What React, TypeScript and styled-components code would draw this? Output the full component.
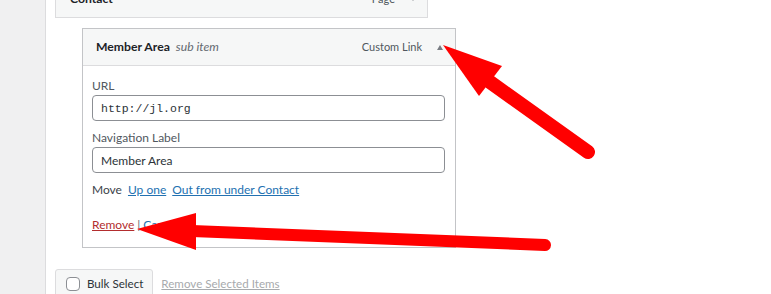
import styled, { createGlobalStyle } from 'styled-components'

const GlobalStyle = createGlobalStyle`
  html, body {
    margin: 0;
    padding: 0;
    background: #fff;
  }
  body {
    font-family: Lato, 'Open Sans', sans-serif;
    font-size: 12px;
    line-height: 16px;
    color: #1d2327;
    overflow: hidden;
  }
`

export default function App() {
  return (
    <>
      <GlobalStyle />
      <Page>
        <Sidebar />
        <Main>
          <ParentItem>
            <ItemTitle>Contact</ItemTitle>
            <ItemControls>
              <ItemType>Page</ItemType>
              <Caret $up={false} />
            </ItemControls>
          </ParentItem>

          <SubItem>
            <SubHeader>
              <ItemTitle>
                Member Area <SubLabel>sub item</SubLabel>
              </ItemTitle>
              <ItemControls>
                <ItemType>Custom Link</ItemType>
                <Caret $up />
              </ItemControls>
            </SubHeader>
            <Settings>
              <Field>
                <FieldLabel>URL</FieldLabel>
                <TextInput $mono readOnly value="http://jl.org" />
              </Field>
              <Field>
                <FieldLabel>Navigation Label</FieldLabel>
                <TextInput readOnly value="Member Area" />
              </Field>
              <MoveRow>
                Move
                <Link href="#">Up one</Link>
                <Link href="#">Out from under Contact</Link>
              </MoveRow>
              <Actions>
                <DangerLink href="#">Remove</DangerLink>
                <Sep>|</Sep>
                <Link href="#">Cancel</Link>
              </Actions>
            </Settings>
          </SubItem>

          <BulkRow>
            <BulkButton>
              <Check />
              Bulk Select
            </BulkButton>
            <MutedLink href="#">Remove Selected Items</MutedLink>
          </BulkRow>
        </Main>

        <Arrows width="771" height="294" viewBox="0 0 771 294">
          <line x1="490" y1="82" x2="588" y2="152" stroke="#ff0000" strokeWidth="14" strokeLinecap="round" />
          <polygon points="443,45 479,96 502,66" fill="#ff0000" />
          <line x1="192" y1="231" x2="545" y2="245" stroke="#ff0000" strokeWidth="12" strokeLinecap="round" />
          <polygon points="137,229 196,213 196,250" fill="#ff0000" />
        </Arrows>
      </Page>
    </>
  )
}

const Page = styled('div')`
  position: relative;
  display: flex;
  width: 771px;
  height: 294px;
  overflow: hidden;
`

const Sidebar = styled('div')`
  width: 45px;
  flex: none;
  background: #f0f0f1;
  border-right: 1px solid #dcdcde;
`

const Main = styled('div')`
  display: flex;
  flex-direction: column;
  align-items: flex-start;
  padding-left: 9px;

  & > * {
    flex: none;
  }
`

const ParentItem = styled('div')`
  box-sizing: border-box;
  width: 373px;
  height: 41px;
  margin-top: -23px;
  display: flex;
  align-items: center;
  justify-content: space-between;
  padding: 2px 11px 0 14px;
  background: #f6f7f7;
  border: 1px solid #dcdcde;
`

const ItemTitle = styled('div')`
  font-size: 12.2px;
  font-weight: 700;
  color: #1d2327;
  white-space: nowrap;
`

const SubLabel = styled('span')`
  margin-left: 3px;
  font-weight: 400;
  font-style: italic;
  color: #646970;
`

const ItemControls = styled('div')`
  display: flex;
  align-items: center;
  gap: 15px;
`

const ItemType = styled('span')`
  font-size: 11px;
  color: #50575e;
`

const Caret = styled('span')<{ $up: boolean }>`
  width: 0;
  height: 0;
  border-left: 3.5px solid transparent;
  border-right: 3.5px solid transparent;
  ${({ $up }) => ($up ? 'border-bottom: 5px solid #787c82;' : 'border-top: 5px solid #787c82;')}
`

const SubItem = styled('div')`
  box-sizing: border-box;
  width: 374px;
  margin: 10px 0 0 27px;
  border: 1px solid #c3c4c7;
`

const SubHeader = styled('div')`
  box-sizing: border-box;
  height: 37px;
  display: flex;
  align-items: center;
  justify-content: space-between;
  padding: 0 12px 0 13px;
  background: #f6f7f7;
  border-bottom: 1px solid #dcdcde;
`

const Settings = styled('div')`
  display: flex;
  flex-direction: column;
  padding: 12px 10px 14px 9px;
`

const Field = styled('label')`
  display: flex;
  flex-direction: column;
  gap: 1px;
  margin-bottom: 9px;
`

const FieldLabel = styled('span')`
  color: #50575e;
`

const TextInput = styled('input')<{ $mono?: boolean }>`
  box-sizing: border-box;
  width: 353px;
  height: 26px;
  padding: 0 8px;
  border: 1px solid #8c8f94;
  border-radius: 4px;
  background: #fff;
  color: #2c3338;
  font-family: ${({ $mono }) => ($mono ? "'Liberation Mono', monospace" : "Lato, 'Open Sans', sans-serif")};
  font-size: ${({ $mono }) => ($mono ? '11.5px' : '12px')};
  outline: none;
`

const MoveRow = styled('div')`
  display: flex;
  gap: 6px;
  color: #3c434a;
`

const Link = styled('a')`
  color: #2271b1;
  text-decoration: underline;
`

const DangerLink = styled('a')`
  color: #b32d2e;
  text-decoration: underline;
`

const Actions = styled('div')`
  display: flex;
  gap: 3px;
  margin-top: 19px;
`

const Sep = styled('span')`
  color: #646970;
`

const BulkRow = styled('div')`
  display: flex;
  align-items: center;
  gap: 8px;
  margin-top: 21px;
  font-size: 11.6px;
`

const BulkButton = styled('div')`
  box-sizing: border-box;
  height: 30px;
  display: flex;
  align-items: center;
  gap: 7px;
  padding: 0 9px 0 10px;
  background: #f6f7f7;
  border: 1px solid #dcdcde;
  border-radius: 3px;
  color: #2c3338;
  white-space: nowrap;
`

const Check = styled('span')`
  box-sizing: border-box;
  flex: none;
  width: 14px;
  height: 14px;
  border: 1px solid #8c8f94;
  border-radius: 4px;
  background: #fff;
`

const MutedLink = styled('a')`
  color: #a7aaad;
  text-decoration: underline;
`

const Arrows = styled('svg')`
  position: absolute;
  left: 0;
  top: 0;
  pointer-events: none;
`
